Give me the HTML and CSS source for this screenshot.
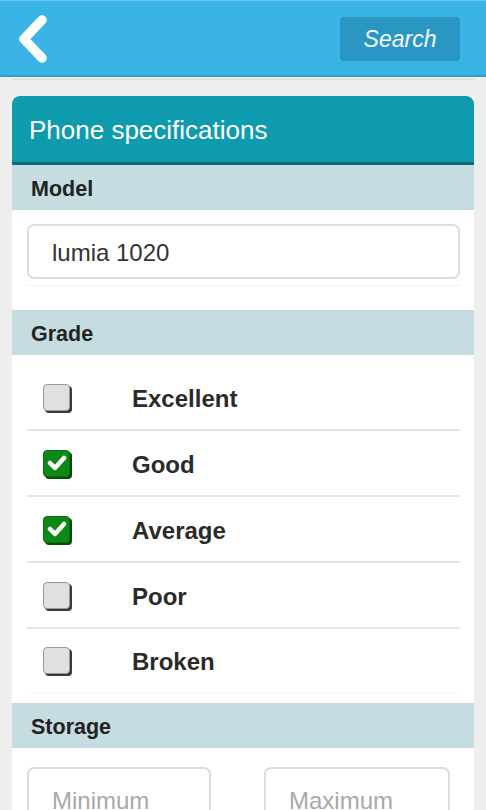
FILE: index.html
```html
<!DOCTYPE html>
<html>
<head>
<meta charset="utf-8">
<link rel="stylesheet" href="styles.css">
</head>
<body>
<header class="topbar">
  <svg class="back" width="40" height="48" viewBox="0 0 40 48"><polyline points="25,5 7,24 25,43" fill="none" stroke="#fff" stroke-width="9.5" stroke-linecap="round" stroke-linejoin="round"/></svg>
  <button class="search-btn">Search</button>
</header>
<div class="rule"></div>
<main class="card">
  <div class="card-title">Phone specifications</div>
  <div class="section-head">Model</div>
  <div class="model-body">
    <div class="field wide">lumia 1020</div>
    <div class="sep"></div>
  </div>
  <div class="section-head">Grade</div>
  <ul class="grades">
    <li class="grade"><span class="box"></span><span class="label">Excellent</span></li>
    <li class="grade"><span class="box on"><svg width="20" height="16" viewBox="0 0 20 16"><polyline points="3,8 8,13 17,3" fill="none" stroke="#fff" stroke-width="4.5" stroke-linecap="round" stroke-linejoin="round"/></svg></span><span class="label">Good</span></li>
    <li class="grade"><span class="box on"><svg width="20" height="16" viewBox="0 0 20 16"><polyline points="3,8 8,13 17,3" fill="none" stroke="#fff" stroke-width="4.5" stroke-linecap="round" stroke-linejoin="round"/></svg></span><span class="label">Average</span></li>
    <li class="grade"><span class="box"></span><span class="label">Poor</span></li>
    <li class="grade last"><span class="box"></span><span class="label">Broken</span></li>
  </ul>
  <div class="section-head">Storage</div>
  <div class="storage-body">
    <div class="field half placeholder">Minimum</div>
    <div class="field half placeholder right">Maximum</div>
  </div>
</main>
</body>
</html>
```
FILE: styles.css
```css
html, body {
  margin: 0;
  padding: 0;
  background: #eeeeee;
  font-family: "Liberation Sans", Arial, sans-serif;
  color: #222;
  overflow: hidden;
  height: 810px;
}
.topbar {
  height: 74px;
  background: #3ab4e4;
  border-top: 1px solid #6ccaee;
  border-bottom: 2px solid #2c9fcd;
  display: flex;
  align-items: center;
  justify-content: space-between;
  padding: 0 26px 0 17px;
  box-sizing: content-box;
}
.back {
  display: block;
  margin-top: 2px;
}
.search-btn {
  width: 120px;
  height: 44px;
  background: #2996c4;
  border: none;
  border-radius: 4px;
  color: #f4fbfe;
  font-family: "Liberation Sans", Arial, sans-serif;
  font-style: italic;
  font-size: 23px;
  padding: 0;
  margin-top: 2px;
}
.rule {
  height: 1px;
  background: #d9d9d9;
  margin: 2px 12px 0;
}
.card {
  margin: 16px 12px 0;
  background: #fff;
}
.card-title {
  height: 66px;
  line-height: 68px;
  background: #0f9bae;
  border-bottom: 3px solid #0b6d7a;
  border-radius: 8px 8px 0 0;
  color: #fff;
  font-size: 26px;
  padding-left: 17px;
}
.section-head {
  height: 45px;
  line-height: 49px;
  background: #c5dde0;
  font-weight: bold;
  font-size: 21.5px;
  padding-left: 19px;
  color: #222;
}
.model-body {
  padding: 14px 14px 0 15px;
  height: 86px;
}
.field {
  box-sizing: border-box;
  height: 55px;
  border: 2px solid #dcdcdc;
  border-radius: 7px;
  font-size: 24px;
  line-height: 53px;
  padding-left: 23px;
  color: #333;
  background: #fff;
}
.sep {
  height: 1px;
  background: #f1f1f1;
  margin-top: 6px;
}
.grades {
  list-style: none;
  margin: 0;
  padding: 10px 14px 9px 15px;
}
.grade {
  height: 64px;
  border-bottom: 2px solid #e6e6e6;
  display: flex;
  align-items: center;
  padding-left: 16px;
}
.grade.last {
  border-bottom-color: #fafafa;
  height: 63px;
}
.box {
  box-sizing: border-box;
  width: 27px;
  height: 27px;
  background: #e0e0e0;
  border: 1px solid #9a9a9a;
  border-radius: 4px;
  box-shadow: 2px 2px 0 #3a3a3a;
  display: flex;
  align-items: center;
  justify-content: center;
  margin-top: 0;
}
.box.on {
  background: #0a8a14;
  border-color: #0b6e10;
  box-shadow: 2px 2px 0 #0a4a0a;
}
.label {
  margin-left: 62px;
  margin-top: 3px;
  font-weight: bold;
  font-size: 24px;
  color: #2a2a2a;
}
.storage-body {
  padding: 19px 24px 0 15px;
  display: flex;
  justify-content: space-between;
}
.field.half {
  width: 184px;
  height: 60px;
  line-height: 64px;
}
.field.right {
  width: 186px;
}
.placeholder {
  color: #a8a8a8;
}
```
